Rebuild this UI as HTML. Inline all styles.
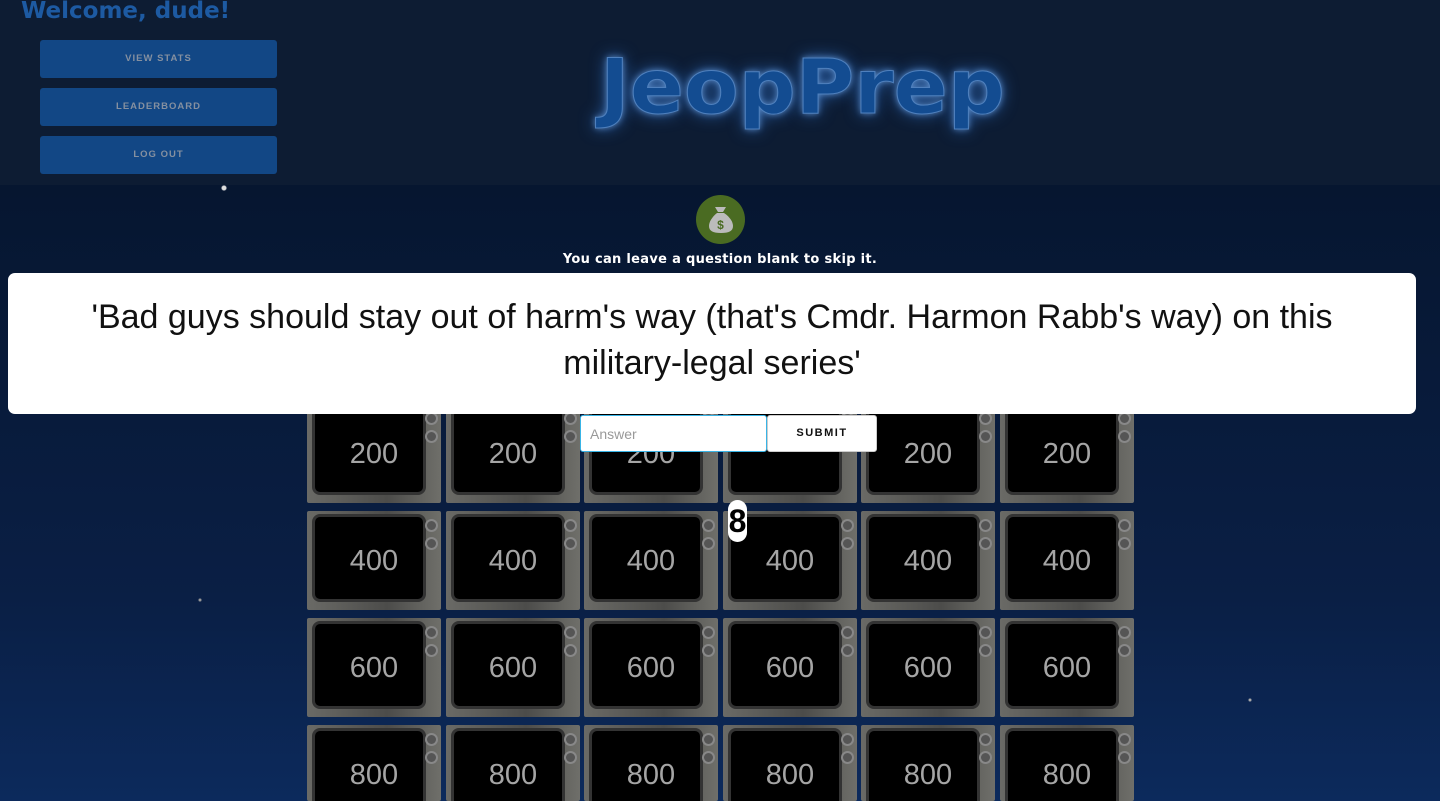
<!DOCTYPE html>
<html style="overflow:hidden;height:801px"><head><meta charset="utf-8"><style>
*{box-sizing:border-box;margin:0;padding:0}
body{width:1440px;height:801px;overflow:hidden;position:relative;font-family:"Liberation Sans",sans-serif;
background:
radial-gradient(circle at 224px 188px,#ddd 0 2px,transparent 3px),
radial-gradient(circle at 395px 63px,#ccc 0 1.5px,transparent 2.5px),
radial-gradient(circle at 1310px 40px,#bbb 0 1px,transparent 2px),
radial-gradient(circle at 1200px 300px,#999 0 1px,transparent 2px),
radial-gradient(circle at 200px 600px,#999 0 1px,transparent 2px),
radial-gradient(circle at 1250px 700px,#aaa 0 1px,transparent 2px),
linear-gradient(#0b1a30 0,#0b1a30 185px,#061630 185px,#0a1f45 600px,#0c2a5c 801px);}
.hdr{position:absolute;left:0;top:0;width:1440px;height:185px;background:#0d1c33}
.welcome{position:absolute;left:21px;top:-2px;font:bold 23px "DejaVu Sans",sans-serif;color:#1d5aa2}
.btn{position:absolute;left:40px;width:237px;height:38px;background:#124785;border-radius:3px;color:#8590a0;font:bold 9.5px "Liberation Sans",sans-serif;letter-spacing:1px;text-align:center;line-height:38px}
.logo{position:absolute;left:600px;top:42px;font:bold 76px "DejaVu Sans",sans-serif;color:#134c91;letter-spacing:0px;text-shadow:0 0 6px #5c8cc8,0 0 16px #2c64b0;-webkit-text-stroke:1px #4f80bd;transform:scaleX(1.05);transform-origin:left}
.bag{position:absolute;left:696px;top:195px;width:49px;height:49px;border-radius:50%;background:#4a6b22}
.tip{position:absolute;left:0;width:1440px;top:252px;text-align:center;color:#fff;font:bold 13px "DejaVu Sans",sans-serif;letter-spacing:0.3px}
.tile{position:absolute;width:134px;height:99px;background:linear-gradient(90deg,#6a6a66,#4c4c4a 60%,#6f6f6a);border-radius:2px;overflow:hidden}
.tile .scr{position:absolute;left:8px;top:6px;width:108px;height:82px;background:#000;border-radius:5px;box-shadow:0 0 0 3px #333}
.tile .k{position:absolute;left:118px;width:13px;height:13px;border-radius:50%;border:2px solid #888;background:#555}
.tile span{position:absolute;left:0;width:134px;top:34px;text-align:center;color:#a5a5a5;font-size:29px}
.modal{position:absolute;left:8px;top:273px;width:1408px;height:141px;background:#fff;border-radius:7px;text-align:center;font-size:34px;line-height:46px;color:#111;padding-top:21px}
.inp{position:absolute;left:580px;top:415px;width:187px;height:37px;background:#fff;border:1px solid #38b4e6;border-radius:3px;color:#999;font-size:14px;padding:10px 9px}
.sub{position:absolute;left:767px;top:415px;width:110px;height:37px;background:#fff;border:1px solid #ccc;border-radius:3px;text-align:center;line-height:35px;font:bold 11px/35px "Liberation Sans",sans-serif;letter-spacing:1.5px;color:#111}
.timer{position:absolute;left:728px;top:500px;width:19px;height:42px;background:#fff;border-radius:10px;text-align:center;font:bold 32px/42px "Liberation Sans",sans-serif;color:#000}
</style></head><body>
<div class="hdr"></div>
<div class="welcome">Welcome, dude!</div>
<div class="btn" style="top:40px">VIEW STATS</div>
<div class="btn" style="top:88px">LEADERBOARD</div>
<div class="btn" style="top:136px">LOG OUT</div>
<div class="logo">JeopPrep</div>
<div class="bag"><svg width="49" height="49" viewBox="0 0 49 49"><path d="M19 12h11l-3 5h-5z" fill="#bbb"/><path d="M21 18h7c6 4 9 9 9 13 0 5-4 7-12 7s-12-2-12-7c0-4 3-9 8-13z" fill="#bbb"/><text x="24.5" y="34" text-anchor="middle" font-size="12" font-weight="bold" fill="#4a6b22" font-family="Liberation Sans">$</text></svg></div>
<div class="tip">You can leave a question blank to skip it.</div>
<div id="board"></div>
<div class="modal">'Bad guys should stay out of harm's way (that's Cmdr. Harmon Rabb's way) on this<br>military-legal series'</div>
<div class="inp">Answer</div>
<div class="sub">SUBMIT</div>
<div class="timer">8</div>
<script>
var b=document.getElementById('board'),xs=[307,446,584,723,861,1000],ys=[404,511,618,725],v=[200,400,600,800],h='';
for(var r=0;r<4;r++)for(var c=0;c<6;c++){var s=(r==0&&c==3)?'':v[r];var hh=r==3?76:99;h+='<div class="tile" style="left:'+xs[c]+'px;top:'+ys[r]+'px;height:'+hh+'px"><div class="scr"></div><div class="k" style="top:8px"></div><div class="k" style="top:26px"></div><span>'+s+'</span></div>';}
b.innerHTML=h;
</script>
</body></html>
